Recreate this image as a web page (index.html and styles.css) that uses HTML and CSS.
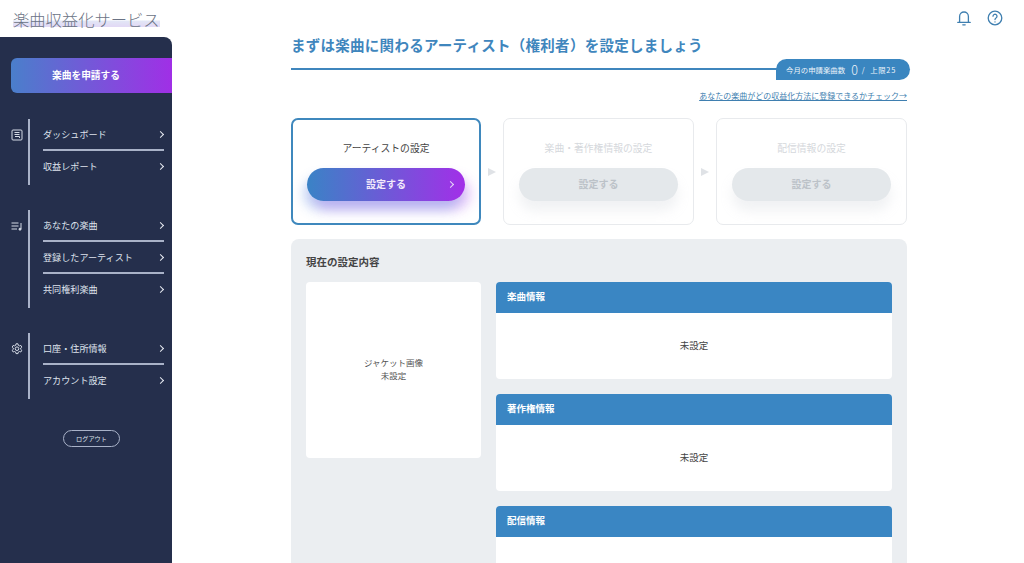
FILE: index.html
```html
<!DOCTYPE html>
<html lang="ja">
<head>
    <meta charset="UTF-8">
    <meta name="viewport" content="width=device-width, initial-scale=1.0">
    <title>楽曲収益化サービス</title>
    <link rel="stylesheet" href="styles.css">
</head>
<body>
    <header class="topbar">
        <div class="logo">楽曲収益化サービス</div>
        <div class="top-icons">
            <svg class="top-icon" viewBox="0 0 16 16" fill="none" stroke="#3f7fb0" stroke-width="1.3" stroke-linecap="round" stroke-linejoin="round">
                <path d="M1.800 12.400h12.400M3.600 12.400V6.400a4.400 4.400 0 0 1 8.800 0v6M6.800 14.800h2.400"/>
            </svg>
            <svg class="top-icon" viewBox="0 0 16 16" fill="none" stroke="#3f7fb0" stroke-width="1.300" stroke-linecap="round">
                <circle cx="8" cy="8" r="6.800"/>
                <path d="M6 6.200a2 2 0 1 1 3 1.800c-.7.4-1 .8-1 1.600M8 11.800v.1"/>
            </svg>
        </div>
    </header>

    <div class="layout">
        <aside class="sidebar">
            <a class="apply-btn">楽曲を申請する</a>

            <div class="nav-group">
                <svg class="nav-icon" viewBox="0 0 12 12" fill="none" stroke="#d5dbe6" stroke-width="1">
                    <rect x="1" y="1" width="10" height="10" rx="1"/>
                    <path d="M3.500 3.500h5M3.500 5.500h5M4 7.500h4.500v1.500"/>
                </svg>
                <ul class="nav-list">
                    <li>ダッシュボード</li>
                    <li>収益レポート</li>
                </ul>
            </div>

            <div class="nav-group">
                <svg class="nav-icon" viewBox="0 0 12 12" fill="none" stroke="#d5dbe6" stroke-width="1">
                    <path d="M0.500 3h7M0.500 6h7M0.500 9h5.500M10 3v6"/>
                    <circle cx="9" cy="9.200" r="1" fill="#d5dbe6"/>
                </svg>
                <ul class="nav-list">
                    <li>あなたの楽曲</li>
                    <li>登録したアーティスト</li>
                    <li>共同権利楽曲</li>
                </ul>
            </div>

            <div class="nav-group">
                <svg class="nav-icon" viewBox="0 0 12 12" fill="none" stroke="#d5dbe6" stroke-width="1" stroke-linejoin="round">
                    <path d="M5 .8h2l.3 1.500 1.100.6 1.400-.5 1 1.700-1.100 1v1.200l1.100 1-1 1.700-1.400-.5-1.100.6-.3 1.500H5l-.3-1.500-1.100-.6-1.400.5-1-1.700 1.100-1V5.100l-1.100-1 1-1.700 1.400.5 1.100-.6z"/>
                    <circle cx="6" cy="5.700" r="1.800"/>
                </svg>
                <ul class="nav-list">
                    <li>口座・住所情報</li>
                    <li>アカウント設定</li>
                </ul>
            </div>

            <a class="logout">ログアウト</a>
        </aside>

        <main class="main">
            <h1 class="page-title">まずは楽曲に関わるアーティスト（権利者）を設定しましょう</h1>
            <div class="title-rule">
                <div class="quota">今月の申請楽曲数<span class="quota-num">0</span><span class="quota-limit">/ &nbsp;上限25</span></div>
            </div>
            <a class="check-link">あなたの楽曲がどの収益化方法に登録できるかチェック→</a>

            <div class="steps">
                <div class="step active">
                    <p>アーティストの設定</p>
                    <a class="step-btn">設定する</a>
                </div>
                <span class="step-arrow"></span>
                <div class="step">
                    <p>楽曲・著作権情報の設定</p>
                    <a class="step-btn">設定する</a>
                </div>
                <span class="step-arrow"></span>
                <div class="step">
                    <p>配信情報の設定</p>
                    <a class="step-btn">設定する</a>
                </div>
            </div>

            <section class="current">
                <h2>現在の設定内容</h2>
                <div class="current-body">
                    <div class="jacket">ジャケット画像<br>未設定</div>
                    <div class="info-list">
                        <div class="info">
                            <h3>楽曲情報</h3>
                            <div class="info-body">未設定</div>
                        </div>
                        <div class="info">
                            <h3>著作権情報</h3>
                            <div class="info-body">未設定</div>
                        </div>
                        <div class="info info-cut">
                            <h3>配信情報</h3>
                            <div class="info-body"></div>
                        </div>
                    </div>
                </div>
            </section>
        </main>
    </div>
</body>
</html>
```

FILE: styles.css
```css
* {
    margin: 0;
    padding: 0;
    box-sizing: border-box;
    font-family: 'Noto Sans CJK JP', 'Noto Sans', sans-serif;
}

body {
    background-color: white;
    color: #444;
    width: 1024px;
    height: 563px;
    overflow: hidden;
}

ul {
    list-style: none;
}

.topbar {
    height: 37px;
    display: flex;
    justify-content: space-between;
    padding: 6px 21px 0 13px;
}

.logo {
    height: 20px;
    font-size: 16.300px;
    line-height: 24px;
    font-weight: 300;
    color: #6b7385;
    background: linear-gradient(to top, #e2d8f5 0, #e2e6f6 6px, transparent 7px);
    margin-top: 1px;
}

.top-icons {
    display: flex;
    gap: 15px;
    margin-top: 4px;
}

.top-icon {
    width: 16px;
    height: 16px;
}

.layout {
    display: flex;
    align-items: flex-start;
}

/* sidebar */
.sidebar {
    width: 172px;
    height: 526px;
    background-color: #252f4c;
    border-radius: 0 8px 0 0;
    padding-top: 21px;
    flex-shrink: 0;
}

.apply-btn {
    display: block;
    height: 35px;
    margin-left: 11px;
    padding-right: 11px;
    border-radius: 6px 0 0 6px;
    background: linear-gradient(90deg, #4a7fcb, #a02fe6);
    color: white;
    font-size: 9.700px;
    font-weight: 700;
    line-height: 34px;
    text-align: center;
}

.nav-group {
    display: flex;
    align-items: flex-start;
    margin-bottom: 25px;
    margin-left: 11px;
}

.apply-btn + .nav-group {
    margin-top: 26px;
}

.nav-icon {
    width: 12px;
    height: 12px;
    flex-shrink: 0;
    margin-right: 5px;
    margin-top: 10px;
}

.nav-list {
    flex: 1;
    border-left: 2px solid #a9b2c8;
    padding: 0 8px 0 13px;
    color: #dfe3ec;
    font-size: 9.100px;
}

.nav-list li {
    height: 32px;
    line-height: 30px;
    border-bottom: 2px solid #a9b2c8;
    position: relative;
}

.nav-list li:last-child {
    height: 34px;
    border-bottom: none;
}

.nav-list li::after {
    content: '';
    position: absolute;
    right: 1px;
    top: 13px;
    width: 4px;
    height: 4px;
    border-top: 1.700px solid #e8ebf2;
    border-right: 1.700px solid #e8ebf2;
    transform: rotate(45deg);
}

.logout {
    display: block;
    width: 57px;
    height: 17px;
    margin: 31px 0 0 63px;
    border: 1px solid #a9b2c8;
    border-radius: 9px;
    color: #dfe3ec;
    font-size: 6.200px;
    line-height: 15px;
    text-align: center;
}

/* main area */
.main {
    width: 616px;
    margin-left: 119px;
}

.page-title {
    font-size: 14.500px;
    font-weight: 700;
    line-height: 20px;
    color: #3f86bd;
    letter-spacing: 0.27px;
    margin-bottom: 13px;
    margin-top: -2px;
    white-space: nowrap;
}

.title-rule {
    height: 2px;
    background-color: #3f86bd;
    width: 490px;
    position: relative;
}

.quota {
    position: absolute;
    left: 485px;
    top: -9px;
    width: 134px;
    height: 21px;
    background-color: #3a86c0;
    border-radius: 11px 11px 11px 0;
    color: #eef4fa;
    font-size: 7.400px;
    padding-left: 10px;
    white-space: nowrap;
    display: flex;
    align-items: center;
}

.quota-num {
    font-size: 12.500px;
    line-height: 16px;
    margin: 0 4px 0 6px;
    font-weight: 300;
}

.quota-limit {
    letter-spacing: 0.7px;
}

.check-link {
    display: block;
    margin-top: 20px;
    font-size: 8px;
    line-height: 12px;
    color: #3f7fb0;
    text-align: right;
    text-decoration: underline;
}

.steps {
    display: flex;
    align-items: center;
    justify-content: space-between;
    margin-top: 16px;
}

.step {
    width: 191px;
    height: 107px;
    border: 1px solid #e8eaed;
    border-radius: 7px;
    padding: 0 15px;
    text-align: center;
}

.step p {
    font-size: 9.800px;
    line-height: 14px;
    margin-top: 22px;
    color: #d5d8dc;
}

.step-btn {
    display: block;
    height: 33px;
    margin-top: 13px;
    border-radius: 17px;
    background-color: #e4e8eb;
    box-shadow: 0 10px 12px rgba(200, 205, 212, 0.25);
    color: #bcc2c8;
    font-size: 10px;
    font-weight: 700;
    line-height: 32px;
}

.step.active {
    width: 190px;
    border: 2px solid #3f88bd;
    padding: 0 14px;
}

.step.active p {
    color: #444;
    margin-top: 21px;
}

.step.active .step-btn {
    background: linear-gradient(90deg, #3a83c6, #a22fe8);
    box-shadow: -4px 9px 12px rgba(58, 120, 220, 0.28), 6px 9px 12px rgba(170, 60, 235, 0.28);
    color: #f3e9fb;
    position: relative;
}

.step.active .step-btn::after {
    content: '';
    position: absolute;
    right: 12px;
    top: 14px;
    width: 4px;
    height: 4px;
    border-top: 1.700px solid #e8d8f8;
    border-right: 1.700px solid #e8d8f8;
    transform: rotate(45deg);
}

.step-arrow {
    width: 0;
    height: 0;
    border-left: 8px solid #dfe2e6;
    border-top: 4px solid transparent;
    border-bottom: 4px solid transparent;
}

.current {
    margin-top: 14px;
    background-color: #ebeef1;
    border-radius: 8px 8px 0 0;
    padding: 15px 15px 0;
    height: 324px;
}

.current h2 {
    font-size: 10.500px;
    font-weight: 700;
    line-height: 16px;
    color: #444;
    margin-bottom: 12px;
}

.current-body {
    display: flex;
    align-items: flex-start;
    gap: 15px;
}

.jacket {
    width: 175px;
    height: 176px;
    flex-shrink: 0;
    background-color: white;
    border-radius: 4px;
    padding-bottom: 2px;
    display: flex;
    align-items: center;
    justify-content: center;
    text-align: center;
    font-size: 8.500px;
    line-height: 13px;
    color: #555;
}

.info-list {
    flex: 1;
    display: flex;
    flex-direction: column;
    gap: 15px;
}

.info {
    background-color: white;
    border-radius: 4px;
    overflow: hidden;
}

.info h3 {
    height: 31px;
    background-color: #3a86c3;
    color: white;
    font-size: 9.500px;
    font-weight: 700;
    line-height: 29px;
    padding-left: 11px;
}

.info-body {
    height: 66px;
    text-align: center;
    font-size: 9.500px;
    line-height: 65px;
    color: #444;
}

/* last panel is cut off by the window */
.info-cut {
    border-radius: 4px 4px 0 0;
}

.info-cut .info-body {
    height: 26px;
}
```
